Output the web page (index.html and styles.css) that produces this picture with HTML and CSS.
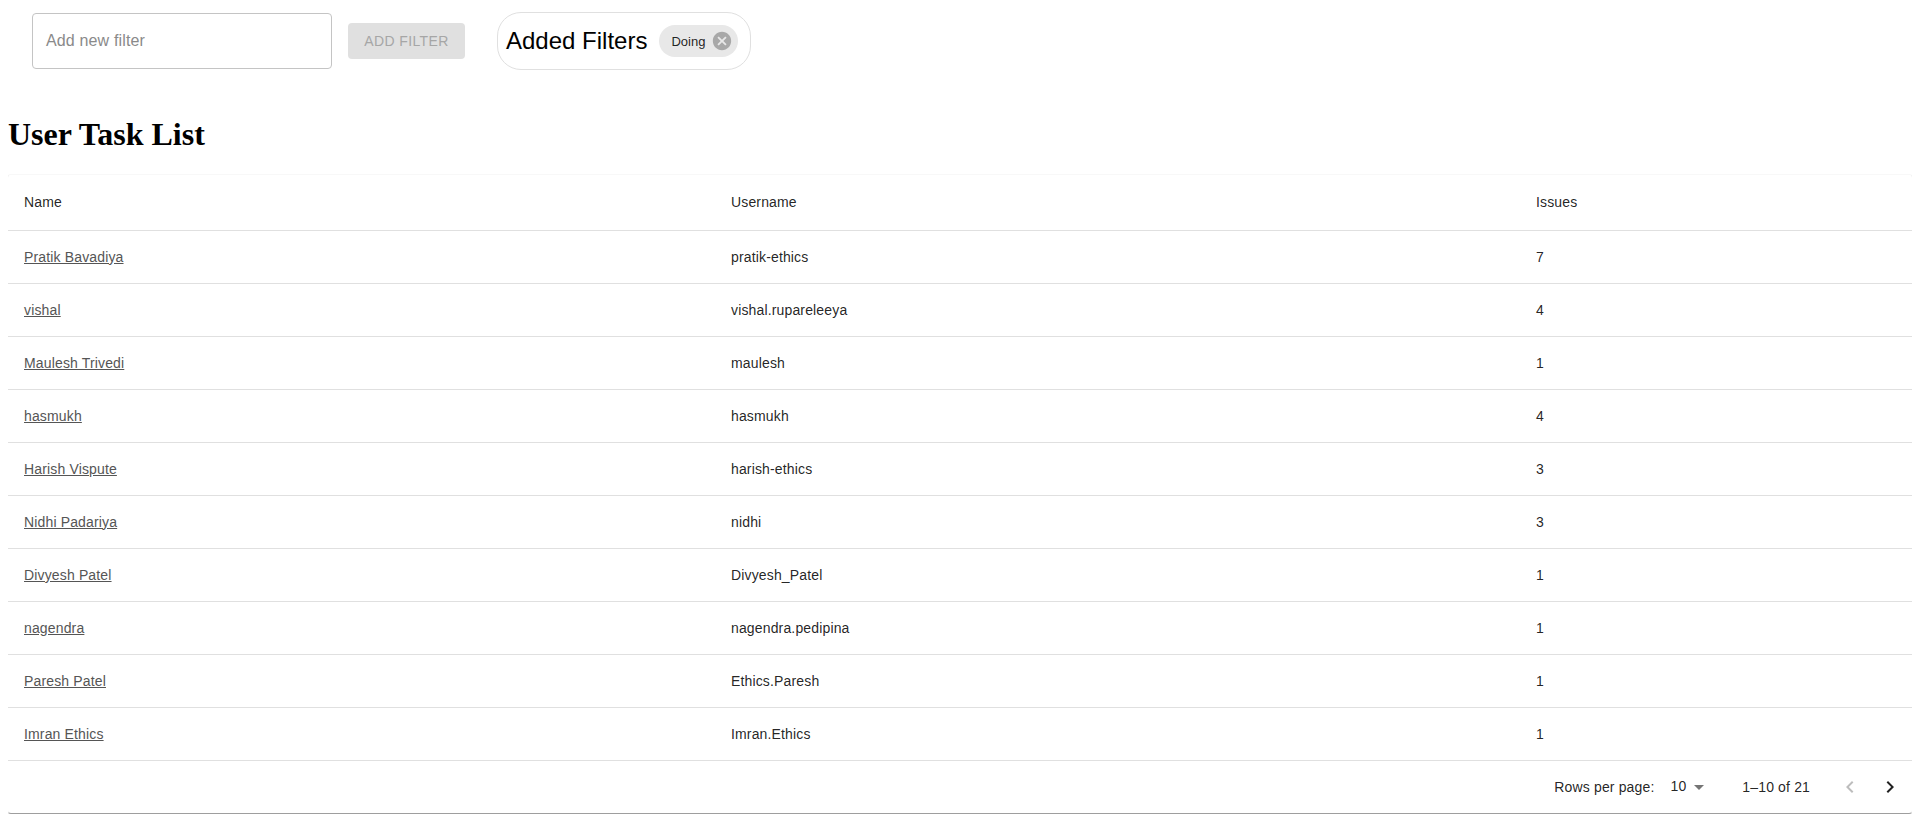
FILE: index.html
```html
<!DOCTYPE html>
<html lang="en">
<head>
  <meta charset="UTF-8">
  <meta name="viewport" content="width=device-width, initial-scale=1.0">
  <title>User Task List</title>
  <link rel="stylesheet" href="styles.css">
</head>
<body>
  <div class="filter-bar">
    <div class="filter-input">Add new filter</div>
    <button class="add-btn" disabled>ADD FILTER</button>
    <div class="added-filters">
      <span class="added-title">Added Filters</span>
      <div class="chip">
        <span class="chip-label">Doing</span>
        <svg class="chip-delete" viewBox="0 0 24 24"><path d="M12 2C6.47 2 2 6.47 2 12s4.47 10 10 10 10-4.47 10-10S17.53 2 12 2zm5 13.59L15.59 17 12 13.41 8.41 17 7 15.59 10.59 12 7 8.41 8.41 7 12 10.59 15.59 7 17 8.41 13.41 12 17 15.59z"/></svg>
      </div>
    </div>
  </div>

  <h1>User Task List</h1>

  <div class="paper">
    <table>
      <thead>
        <tr>
          <th class="col-name">Name</th>
          <th class="col-user">Username</th>
          <th>Issues</th>
        </tr>
      </thead>
      <tbody>
        <tr><td><a href="#">Pratik Bavadiya</a></td><td>pratik-ethics</td><td>7</td></tr>
        <tr><td><a href="#">vishal</a></td><td>vishal.rupareleeya</td><td>4</td></tr>
        <tr><td><a href="#">Maulesh Trivedi</a></td><td>maulesh</td><td>1</td></tr>
        <tr><td><a href="#">hasmukh</a></td><td>hasmukh</td><td>4</td></tr>
        <tr><td><a href="#">Harish Vispute</a></td><td>harish-ethics</td><td>3</td></tr>
        <tr><td><a href="#">Nidhi Padariya</a></td><td>nidhi</td><td>3</td></tr>
        <tr><td><a href="#">Divyesh Patel</a></td><td>Divyesh_Patel</td><td>1</td></tr>
        <tr><td><a href="#">nagendra</a></td><td>nagendra.pedipina</td><td>1</td></tr>
        <tr><td><a href="#">Paresh Patel</a></td><td>Ethics.Paresh</td><td>1</td></tr>
        <tr><td><a href="#">Imran Ethics</a></td><td>Imran.Ethics</td><td>1</td></tr>
      </tbody>
    </table>
    <div class="pagination">
      <span class="rows-label">Rows per page:</span>
      <span class="rows-select">10
        <svg class="select-arrow" viewBox="0 0 24 24"><path d="M7 10l5 5 5-5z"/></svg>
      </span>
      <span class="page-info">1–10 of 21</span>
      <svg class="page-btn page-prev" viewBox="0 0 24 24"><path d="M15.41 7.41L14 6l-6 6 6 6 1.41-1.41L10.83 12z"/></svg>
      <svg class="page-btn page-next" viewBox="0 0 24 24"><path d="M10 6L8.59 7.41 13.17 12l-4.58 4.59L10 18l6-6z"/></svg>
    </div>
  </div>
</body>
</html>
```

FILE: styles.css
```css
body {
  margin: 8px;
  background-color: #fff;
  font-family: "Liberation Serif", serif;
}
.filter-bar {
  display: flex;
  align-items: center;
  padding: 4px 0 0 24px;
}
.filter-input {
  box-sizing: border-box;
  width: 300px;
  height: 56px;
  padding: 0 13px;
  display: flex;
  align-items: center;
  border: 1px solid #c4c4c4;
  border-radius: 4px;
  font-family: "Liberation Sans", sans-serif;
  font-size: 16px;
  letter-spacing: 0.15px;
  color: #8a8a8a;
}
.add-btn {
  box-sizing: border-box;
  width: 117px;
  height: 36px;
  margin-left: 16px;
  border: none;
  border-radius: 4px;
  background-color: #e0e0e0;
  color: #a6a6a6;
  font-family: "Liberation Sans", sans-serif;
  font-size: 14px;
  letter-spacing: 0.4px;
}
.added-filters {
  box-sizing: border-box;
  display: flex;
  align-items: center;
  width: 254px;
  height: 58px;
  margin-left: 32px;
  padding: 0 8px;
  border: 1px solid #e0e0e0;
  border-radius: 24px;
}
.added-title {
  font-family: "Liberation Sans", sans-serif;
  font-size: 24px;
  color: #000;
}
.chip {
  display: flex;
  align-items: center;
  height: 32px;
  margin-left: 12px;
  padding: 0 5px 0 12px;
  border-radius: 16px;
  background-color: #e8e8e8;
}
.chip-label {
  font-family: "Liberation Sans", sans-serif;
  font-size: 13px;
  color: rgba(0, 0, 0, 0.87);
}
.chip-delete {
  width: 22px;
  height: 22px;
  margin-left: 6px;
  fill: #a8a8a8;
}
h1 {
  margin: 46px 0 21px;
  font-size: 32px;
  line-height: 37px;
  color: #000;
}
.paper {
  margin: 0 -1px;
  border: 1px solid #e9e9e9;
  border-top-color: #f8f8f8;
  border-bottom: 1px solid #9e9e9e;
  border-radius: 4px;
  background: #fff;
  font-family: "Liberation Sans", sans-serif;
  font-size: 14px;
  letter-spacing: 0.15px;
  color: rgba(0, 0, 0, 0.87);
}
table {
  width: 100%;
  border-collapse: collapse;
  table-layout: fixed;
}
th, td {
  height: 53px;
  box-sizing: border-box;
  padding: 0 16px;
  border-bottom: 1px solid #e0e0e0;
  text-align: left;
  font-weight: normal;
}
th {
  height: 55px;
}
.col-name {
  width: 707px;
}
.col-user {
  width: 805px;
}
a {
  color: #555;
  text-decoration: underline;
}
.pagination {
  display: flex;
  align-items: center;
  justify-content: flex-end;
  height: 52px;
  padding-right: 2px;
}
.rows-select {
  display: flex;
  align-items: center;
  margin-left: 16px;
  padding-bottom: 2px;
}
.select-arrow {
  width: 24px;
  height: 24px;
  margin: 2px -1px 0 1px;
  fill: #757575;
}
.page-info {
  margin-left: 32px;
}
.page-btn {
  width: 24px;
  height: 24px;
  padding: 12px 8px;
}
.page-prev {
  margin-left: 20px;
  fill: #bdbdbd;
}
.page-next {
  fill: #212121;
}
```
